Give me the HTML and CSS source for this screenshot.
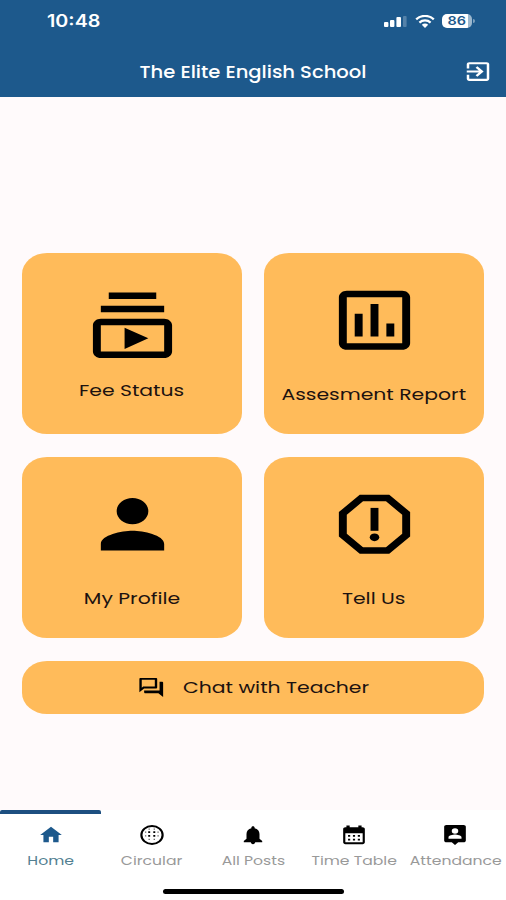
FILE: index.html
```html
<!DOCTYPE html>
<html lang="en">
<head>
  <meta charset="UTF-8" />
  <meta name="viewport" content="width=device-width, initial-scale=1.0"/>
  <title>The Elite English School</title>
  <link rel="stylesheet" href="styles.css">
</head>
<body>
  <div class="app">
    <header class="header">
      <div class="status-bar">
        <span class="time">10:48</span>
        <div class="status-icons">
          <svg class="signal" viewBox="0 0 24 11">
            <rect x="0" y="6" width="4.4" height="5" rx="1"/>
            <rect x="6" y="4" width="4.4" height="7" rx="1"/>
            <rect x="12.4" y="1" width="4.6" height="10" rx="1"/>
            <rect x="19" y="0" width="3.6" height="11" rx="1" opacity=".25"/>
          </svg>
          <svg class="wifi" viewBox="0 0 20 13" preserveAspectRatio="none">
            <path d="M1.2 4.4C6 -.2 14 -.2 18.8 4.4M4.4 7.6c3.2-2.9 8-2.9 11.2 0" fill="none" stroke="#fff" stroke-width="2.3"/>
            <path d="M6.8 9.7c1.8-1.5 4.6-1.5 6.4 0L10 12.9z"/>
          </svg>
          <div class="battery"><span class="battery-level">86</span></div>
        </div>
      </div>
      <div class="title-bar">
        <h1 class="title">The Elite English School</h1>
        <svg class="logout" viewBox="0 0 24 24" preserveAspectRatio="none">
          <path d="M10.09 15.59L11.5 17l5-5-5-5-1.41 1.41L12.67 11H3v2h9.67l-2.58 2.59zM19 3H5c-1.11 0-2 .9-2 2v4h2V5h14v14H5v-4H3v4c0 1.1.89 2 2 2h14c1.1 0 2-.9 2-2V5c0-1.1-.9-2-2-2z"/>
        </svg>
      </div>
    </header>

    <main class="content">
      <div class="cards">
        <div class="card card-fee">
          <svg class="card-icon" viewBox="0 0 24 24" preserveAspectRatio="none">
            <path d="M4 6h16v2H4zm2-4h12v2H6zm14 8H4c-1.1 0-2 .9-2 2v8c0 1.1.9 2 2 2h16c1.1 0 2-.9 2-2v-8c0-1.1-.9-2-2-2zm0 10H4v-8h16v8zm-10-7.27v6.53L16 16z"/>
          </svg>
          <span class="label">Fee Status</span>
        </div>
        <div class="card">
          <svg class="card-icon" viewBox="0 0 24 24" preserveAspectRatio="none">
            <path d="M19 3H5c-1.1 0-2 .9-2 2v14c0 1.1.9 2 2 2h14c1.1 0 2-.9 2-2V5c0-1.1-.9-2-2-2zm0 16H5V5h14v14zM7 10h2v7H7zm4-3h2v10h-2zm4 6h2v4h-2z"/>
          </svg>
          <span class="label">Assesment Report</span>
        </div>
        <div class="card">
          <svg class="card-icon" viewBox="0 0 24 24" preserveAspectRatio="none">
            <path d="M12 12c2.21 0 4-1.79 4-4s-1.79-4-4-4-4 1.79-4 4 1.79 4 4 4zm0 2c-2.67 0-8 1.34-8 4v2h16v-2c0-2.66-5.33-4-8-4z"/>
          </svg>
          <span class="label">My Profile</span>
        </div>
        <div class="card">
          <svg class="card-icon" viewBox="0 0 24 24" preserveAspectRatio="none">
            <path d="M15.73 3H8.27L3 8.27v7.46L8.27 21h7.46L21 15.73V8.27L15.73 3zM19 14.9L14.9 19H9.1L5 14.9V9.1L9.1 5h5.8L19 9.1v5.8z"/>
            <circle cx="12" cy="16" r="1.2"/>
            <path d="M11 7h2v7h-2z"/>
          </svg>
          <span class="label">Tell Us</span>
        </div>
      </div>
      <div class="chat">
        <svg class="chat-icon" viewBox="0 0 24 24" preserveAspectRatio="none">
          <path d="M15 4v7H5.17L4 12.17V4h11m1-2H3c-.55 0-1 .45-1 1v14l4-4h10c.55 0 1-.45 1-1V3c0-.55-.45-1-1-1zm5 4h-2v9H6v2c0 .55.45 1 1 1h11l4 4V7c0-.55-.45-1-1-1z"/>
        </svg>
        <span class="label label-chat">Chat with Teacher</span>
      </div>
    </main>

    <nav class="bottom-nav">
      <div class="nav-item active">
        <svg class="nav-icon" viewBox="0 0 24 24" preserveAspectRatio="none">
          <path d="M10 20v-6h4v6h5v-8h3L12 3 2 12h3v8z"/>
        </svg>
        <span class="nav-label">Home</span>
      </div>
      <div class="nav-item">
        <svg class="nav-icon" viewBox="0 0 24 24" preserveAspectRatio="none">
          <circle cx="12" cy="12" r="9.8" fill="none" stroke="#000" stroke-width="2"/>
          <path d="M8.5 8h1.8v1.8H8.5zM13.2 8H15v1.8h-1.8zM8.5 12h1.8v1.8H8.5zM13.2 12H15v1.8h-1.8z"/>
          <path fill="#666" d="M5.5 8.3h1.2v1.2H5.5zM17 8.3h1.2v1.2H17zM5.5 12.3h1.2v1.2H5.5zM17 12.3h1.2v1.2H17zM8.8 5H10v1.2H8.8zM13.5 5h1.2v1.2h-1.2zM8.8 16.2H10v1.2H8.8zM13.5 16.2h1.2v1.2h-1.2z"/>
        </svg>
        <span class="nav-label">Circular</span>
      </div>
      <div class="nav-item">
        <svg class="nav-icon" viewBox="0 0 24 24" preserveAspectRatio="none">
          <path d="M12 22c1.1 0 2-.9 2-2h-4c0 1.1.89 2 2 2zm6-6v-5c0-3.07-1.64-5.64-4.5-6.32V4c0-.83-.67-1.5-1.5-1.5s-1.5.67-1.5 1.5v.68C7.63 5.36 6 7.92 6 11v5l-2.5 2.5V20h17v-1.5L18 16z"/>
        </svg>
        <span class="nav-label">All Posts</span>
      </div>
      <div class="nav-item">
        <svg class="nav-icon" viewBox="0 0 24 24" preserveAspectRatio="none">
          <path fill-rule="evenodd" d="M5 1.5h3v2h8v-2h3v2h1c1.1 0 2 .9 2 2V20c0 1.1-.9 2-2 2H4c-1.1 0-2-.9-2-2V5.5c0-1.1.9-2 2-2h1zM4 10v10h16V10z"/>
          <path d="M6.5 12h2v2h-2zm4.500 0h2v2h-2zm4.500 0h2v2h-2zm-9 4h2v2h-2zm4.500 0h2v2h-2zm4.500 0h2v2h-2z"/>
        </svg>
        <span class="nav-label">Time Table</span>
      </div>
      <div class="nav-item">
        <svg class="nav-icon" viewBox="0 0 24 24" preserveAspectRatio="none">
          <path fill-rule="evenodd" d="M20 1H4c-1.1 0-2 .9-2 2v15c0 1.1.9 2 2 2h5l3 3 3-3h5c1.1 0 2-.9 2-2V3c0-1.1-.9-2-2-2zm-8 3.500a3 3 0 0 1 0 6 3 3 0 0 1 0-6zM18 16H6v-1.500c0-2 4-3 6-3s6 1 6 3z"/>
        </svg>
        <span class="nav-label">Attendance</span>
      </div>
    </nav>
    <div class="home-bar"></div>
  </div>
</body>
</html>
```
FILE: styles.css
```css
* {
  box-sizing: border-box;
  font-family: 'Poppins', 'Inter', sans-serif;
}

body {
  margin: 0;
  background: #fff;
}

svg {
  display: block;
  flex-shrink: 0;
}

.app {
  width: 506px;
  height: 900px;
  display: flex;
  flex-direction: column;
  overflow: hidden;
}

.header {
  height: 97px;
  background: #1d598c;
  color: #fff;
  flex-shrink: 0;
}

.header svg {
  fill: #fff;
}

.status-bar {
  height: 42px;
  padding: 0 32px 0 47px;
  display: flex;
  justify-content: space-between;
  align-items: center;
}

.time {
  font-family: 'Inter', sans-serif;
  font-size: 17px;
  font-weight: 600;
  transform: scaleX(1.16);
  transform-origin: left;
}

.status-icons {
  display: flex;
  align-items: center;
}

.signal {
  width: 24px;
  height: 11px;
  margin-right: 7px;
}

.wifi {
  width: 20px;
  height: 13px;
  margin-right: 7px;
}

.battery {
  position: relative;
  width: 30px;
  height: 14px;
  margin-right: 2px;
  border-radius: 5px;
  background: linear-gradient(to right, #fff 87%, #9cb8ce 87%);
  color: #1d598c;
  font-size: 12px;
  line-height: 14px;
  text-align: center;
}

.battery-level {
  display: inline-block;
  font-family: 'Inter', sans-serif;
  font-weight: 600;
  transform: scaleX(1.2);
}

.battery::after {
  content: '';
  position: absolute;
  right: -3px;
  top: 5px;
  width: 2px;
  height: 4px;
  border-radius: 0 2px 2px 0;
  background: #7fa2bf;
}

.title-bar {
  height: 58px;
  padding: 0 13px 0 43px;
  display: flex;
  align-items: center;
}

.title {
  flex: 1;
  margin: 0;
  padding-top: 1px;
  font-size: 17px;
  font-weight: 500;
  text-align: center;
  transform: scaleX(1.15);
}

.logout {
  width: 30px;
  height: 25px;
}

.content {
  height: 713px;
  padding: 156px 22px 0;
  background: #fffafb;
  flex-shrink: 0;
}

.cards {
  display: grid;
  grid-template-columns: 1fr 1fr;
  grid-auto-rows: 181px;
  gap: 23px 22px;
}

.card {
  padding-top: 28px;
  display: flex;
  flex-direction: column;
  align-items: center;
  gap: 23.5px;
  background: #ffbb5a;
  border-radius: 25px / 21px;
}

.card-fee {
  padding-top: 33px;
  gap: 14.5px;
}

.card-icon {
  width: 95px;
  height: 78.5px;
  margin-left: 1px;
}

.label {
  font-size: 16.5px;
  line-height: 24px;
  color: #1c1210;
  white-space: nowrap;
  transform: scaleX(1.235);
}

.chat {
  height: 53px;
  margin-top: 22.5px;
  padding-left: 115px;
  display: flex;
  align-items: center;
  gap: 17px;
  background: #ffbb5a;
  border-radius: 25px / 21px;
}

.chat-icon {
  width: 28.5px;
  height: 23px;
}

.label-chat {
  padding-top: 1px;
  transform-origin: left;
}

.bottom-nav {
  height: 76px;
  display: grid;
  grid-template-columns: repeat(5, 1fr);
  flex-shrink: 0;
}

.nav-item {
  padding-top: 10px;
  border-top: 4px solid transparent;
  display: flex;
  flex-direction: column;
  align-items: center;
  gap: 5px;
}

.nav-item.active {
  border-radius: 2px;
  background: linear-gradient(#1d4f80, #1d4f80) top / 100% 4px no-repeat border-box;
}

.active .nav-icon {
  fill: #1d598c;
}

.nav-icon {
  width: 26px;
  height: 22px;
}

.nav-label {
  font-size: 12.5px;
  line-height: 20px;
  color: #999;
  white-space: nowrap;
  transform: scaleX(1.25);
}

.active .nav-label {
  color: #537f91;
}

.home-bar {
  width: 181px;
  height: 5px;
  margin: 3px auto 0;
  border-radius: 3px;
  background: #000;
}
```
